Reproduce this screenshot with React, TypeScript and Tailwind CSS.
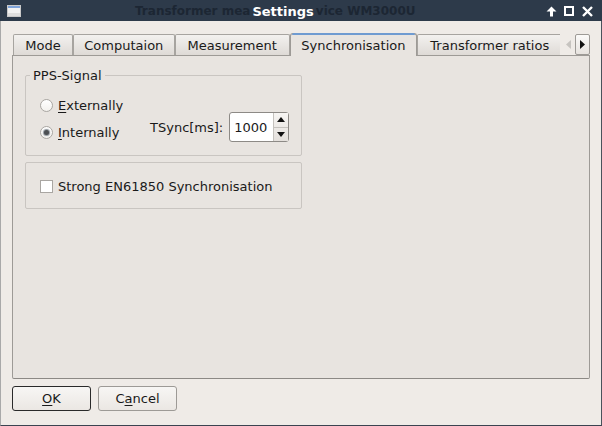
import React from "react";

const font = { fontFamily: '"DejaVu Sans", "Liberation Sans", sans-serif' };

function Tab({ label, w, active }: { label: string; w: number; active?: boolean }) {
  if (active) {
    return (
      <div
        className="relative -mb-[1px] flex h-[23px] items-center justify-center rounded-t-[3px] border border-b-0 border-[#9d9a96] bg-[#e8e4e0] text-[#1a1a1a]"
        style={{ width: w }}
      >
        <div className="absolute -top-[1px] left-[1px] right-[1px] h-[2px] rounded-t-[3px] bg-[#6f9bd1]" />
        <span className="pt-[1px]">{label}</span>
      </div>
    );
  }
  return (
    <div
      className="flex h-[21px] items-center justify-center rounded-t-[2px] border border-b-0 border-[#a7a4a0] bg-gradient-to-b from-[#f3f1ef] to-[#dedad6] text-[#1a1a1a]"
      style={{ width: w }}
    >
      <span className="pt-[1px]">{label}</span>
    </div>
  );
}

function Radio({ checked }: { checked?: boolean }) {
  return (
    <div className="flex h-[13px] w-[13px] items-center justify-center rounded-full border border-[#a9a6a2] bg-gradient-to-b from-[#ffffff] to-[#f3f1ee]">
      {checked && <div className="h-[5px] w-[5px] rounded-full bg-[#4b4e52] shadow-[0_0_1px_1px_#8d949c]" />}
    </div>
  );
}

export default function App() {
  return (
    <div
      className="flex h-[426px] w-[602px] flex-col overflow-hidden bg-[#efebe7] text-[13px] leading-none text-[#1a1a1a]"
      style={font}
    >
      {/* title bar */}
      <div className="relative flex h-[21px] shrink-0 items-center bg-[#2d3a4a]">
        <svg className="absolute left-[7px] top-[5px]" width="14" height="12" viewBox="0 0 14 12">
          <rect x="0.5" y="0.5" width="13" height="11" fill="#f2f2f2" stroke="#c9c9c9" />
          <rect x="1" y="1" width="12" height="2" fill="#7fa3d9" />
          <rect x="1" y="8" width="12" height="3" fill="#dedede" />
        </svg>
        <div className="flex items-center pl-[135px] pt-[1px] font-bold">
          <span className="shrink-0 whitespace-nowrap text-[12px] text-[#1c2633]">Transformer mea</span>
          <span className="shrink-0 whitespace-nowrap pl-[2px] pr-[2px] text-[13px] text-white">Settings</span>
          <span className="shrink-0 whitespace-nowrap text-[12px] text-[#1c2633]">vice WM3000U</span>
        </div>
        <svg className="absolute left-[546px] top-[6px]" width="11" height="11" viewBox="0 0 11 11">
          <path d="M5.5 0.5 L10.5 5.5 L7 5.5 L7 10.5 L4 10.5 L4 5.5 L0.5 5.5 Z" fill="#ffffff" />
        </svg>
        <svg className="absolute left-[564px] top-[6px]" width="10" height="10" viewBox="0 0 10 10">
          <rect x="1" y="1" width="8" height="8" fill="none" stroke="#ffffff" strokeWidth="2" />
        </svg>
        <svg className="absolute left-[582px] top-[6px]" width="11" height="11" viewBox="0 0 11 11">
          <path d="M1 1 L10 10 M10 1 L1 10" stroke="#ffffff" strokeWidth="2.4" />
        </svg>
      </div>

      <div className="flex flex-1 flex-col border-b border-l border-r border-b-[#3a4350] border-l-[#a9a9a9] border-r-[#4a525c] pl-[11px] pr-[11px] pt-[12px]">
        {/* tab row */}
        <div className="relative z-10 flex h-[22px] items-end pl-[1px]">
          <Tab label="Mode" w={60} />
          <Tab label="Computaion" w={102} />
          <Tab label="Measurement" w={115} />
          <Tab label="Synchronisation" w={128} active />
          <div className="h-[21px] w-[143px] overflow-hidden">
            <div className="flex h-[21px] w-[150px] items-center rounded-t-[2px] border border-b-0 border-[#a7a4a0] bg-gradient-to-b from-[#f3f1ef] to-[#dedad6] pl-[12px]">
              <span className="pt-[1px]">Transformer ratios</span>
            </div>
          </div>
          <div className="ml-[1px] flex h-[21px] w-[14px] items-center justify-center">
            <svg width="5" height="9" viewBox="0 0 5 9">
              <path d="M5 0 L0 4.5 L5 9 Z" fill="#c7c4c0" />
            </svg>
          </div>
          <div className="flex h-[21px] w-[15px] items-center justify-center rounded-[2px] border border-[#9d9a96] bg-gradient-to-b from-[#fbfaf9] to-[#e7e3df]">
            <svg width="5" height="9" viewBox="0 0 5 9">
              <path d="M0 0 L5 4.5 L0 9 Z" fill="#111111" />
            </svg>
          </div>
        </div>

        {/* pane */}
        <div className="flex h-[324px] flex-col rounded-b-[2px] border border-[#9d9a96] border-b-[#8c8985] bg-[#e8e4e0] pl-[12px] pt-[19px]">
          {/* PPS-Signal group */}
          <div className="relative h-[81px] w-[277px] rounded-[2px] border border-[#c9c5c1]">
            <span className="absolute -top-[7px] left-[4px] bg-[#e8e4e0] px-[3px]">PPS-Signal</span>
            <div className="flex h-full pl-[14px]">
              <div className="flex w-[110px] flex-col pt-[19px]">
                <div className="flex h-[20px] items-center gap-[5px]">
                  <Radio />
                  <span>
                    <span className="underline underline-offset-2">E</span>xternally
                  </span>
                </div>
                <div className="mt-[7px] flex h-[20px] items-center gap-[5px]">
                  <Radio checked />
                  <span>
                    <span className="underline underline-offset-2">I</span>nternally
                  </span>
                </div>
              </div>
              <div className="flex items-end pb-[13px]">
                <div className="flex h-[30px] items-center gap-[6px]">
                  <span>TSync[ms]:</span>
                  <div className="flex h-[30px] w-[60px] rounded-[3px] border border-[#8d8a86] bg-white">
                    <div className="flex flex-1 items-center pl-[4px] text-[13px]">1000</div>
                    <div className="flex w-[15px] flex-col border-l border-[#c5c2be] bg-gradient-to-b from-[#f7f5f3] to-[#e4e0dc]">
                      <div className="flex flex-1 items-center justify-center border-b border-[#c5c2be]">
                        <svg width="8" height="5" viewBox="0 0 8 5">
                          <path d="M0 5 L4 0 L8 5 Z" fill="#111" />
                        </svg>
                      </div>
                      <div className="flex flex-1 items-center justify-center">
                        <svg width="8" height="5" viewBox="0 0 8 5">
                          <path d="M0 0 L8 0 L4 5 Z" fill="#111" />
                        </svg>
                      </div>
                    </div>
                  </div>
                </div>
              </div>
            </div>
          </div>

          {/* EN61850 group */}
          <div className="mt-[6px] flex h-[47px] w-[277px] items-center gap-[5px] rounded-[2px] border border-[#c9c5c1] pl-[14px] pt-[1px]">
            <div className="h-[13px] w-[13px] border border-[#a9a6a2] bg-white" />
            <span>Strong EN61850 Synchronisation</span>
          </div>
        </div>

        {/* buttons */}
        <div className="mt-[7px] flex gap-[7px]">
          <div className="flex h-[25px] w-[79px] items-center justify-center rounded-[3px] border border-[#2a2a2a] bg-gradient-to-b from-[#f7f6f4] to-[#ebe7e3]">
            <span>
              <span className="underline underline-offset-2">O</span>K
            </span>
          </div>
          <div className="flex h-[25px] w-[79px] items-center justify-center rounded-[3px] border border-[#9d9a96] bg-gradient-to-b from-[#f7f6f4] to-[#ebe7e3]">
            <span>
              C<span className="underline underline-offset-2">a</span>ncel
            </span>
          </div>
        </div>
      </div>
    </div>
  );
}
